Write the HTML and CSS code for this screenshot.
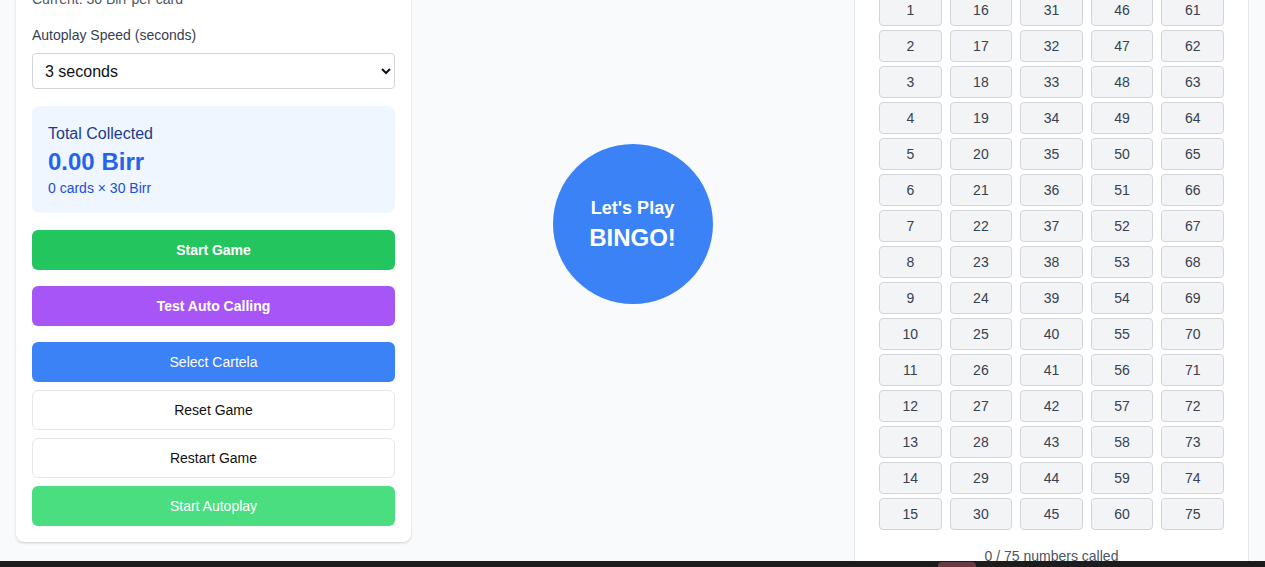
FILE: index.html
```html
<!DOCTYPE html>
<html lang="en">
<head>
<meta charset="utf-8">
<title>Bingo</title>
<link rel="stylesheet" href="styles.css">
</head>
<body>
<main class="layout">
  <section class="card controls">
    <h2 class="card-title">Game Settings</h2>
    <label class="field-label">Price per Card (Birr)</label>
    <input class="field-input" type="number" value="30">
    <p class="hint">Current: 30 Birr per card</p>

    <label class="field-label speed-label" for="speed">Autoplay Speed (seconds)</label>
    <select id="speed" class="field-select">
      <option>3 seconds</option>
    </select>

    <div class="total">
      <div class="total-label">Total Collected</div>
      <div class="total-amount">0.00 Birr</div>
      <div class="total-detail">0 cards × 30 Birr</div>
    </div>

    <div class="actions">
      <button class="btn btn-green bold">Start Game</button>
      <button class="btn btn-purple bold">Test Auto Calling</button>
      <div class="actions-tight">
        <button class="btn btn-blue">Select Cartela</button>
        <button class="btn btn-outline">Reset Game</button>
        <button class="btn btn-outline">Restart Game</button>
        <button class="btn btn-lightgreen">Start Autoplay</button>
      </div>
    </div>
  </section>

  <section class="stage">
    <div class="ball">
      <span class="ball-top">Let's Play</span>
      <span class="ball-main">BINGO!</span>
    </div>
  </section>

  <section class="card board">
    <h2 class="card-title board-title">Called Numbers</h2>
    <div class="letters">
      <span>B</span><span>I</span><span>N</span><span>G</span><span>O</span>
    </div>
    <div class="grid" id="grid"></div>
    <p class="called">0 / 75 numbers called</p>
  </section>
</main>
<div class="taskbar"><span class="task-item"></span></div>
<script src="app.js"></script>
</body>
</html>
```

FILE: app.js
```js
const grid = document.getElementById('grid');
for (let r = 1; r <= 15; r++) {
  for (let c = 0; c < 5; c++) {
    const d = document.createElement('div');
    d.className = 'cell';
    d.textContent = r + c * 15;
    grid.appendChild(d);
  }
}
```

FILE: styles.css
```css
* { box-sizing: border-box; }
html, body { margin: 0; padding: 0; }
body {
  background: #f9fafb;
  font-family: "Liberation Sans", Arial, sans-serif;
  color: #111827;
  overflow: hidden;
}
.layout {
  display: grid;
  grid-template-columns: repeat(3, 1fr);
  gap: 24px;
  padding: 16px;
  margin-top: -155px;
}
.card {
  background: #fff;
  border-radius: 8px;
  box-shadow: 0 1px 3px rgba(0,0,0,0.12), 0 1px 2px rgba(0,0,0,0.06);
}
.controls {
  padding: 16px;
  align-self: start;
  display: flex;
  flex-direction: column;
}
.card-title {
  margin: 0 0 16px;
  font-size: 20px;
  line-height: 28px;
  font-weight: 700;
}
.field-label {
  display: block;
  font-size: 14px;
  line-height: 20px;
  color: #374151;
  margin-bottom: 8px;
}
.field-input {
  height: 36px;
  border: 1px solid #d1d5db;
  border-radius: 4px;
  padding: 0 12px;
  font: 16px "Liberation Sans", Arial, sans-serif;
  margin-bottom: 4px;
}
.hint {
  margin: 0 0 16px;
  font-size: 14px;
  line-height: 20px;
  color: #4b5563;
}
.field-select {
  height: 36px;
  border: 1px solid #d1d5db;
  border-radius: 4px;
  padding: 0 8px;
  font: 16px "Liberation Sans", Arial, sans-serif;
  color: #111;
  background: #fff;
  margin-bottom: 17px;
}
.total {
  background: #eff6ff;
  border-radius: 8px;
  padding: 17px 16px 16px;
  height: 107px;
  margin-bottom: 17px;
}
.total-label {
  font-size: 16px;
  line-height: 22px;
  color: #1e3a8a;
}
.total-amount {
  font-size: 24px;
  line-height: 34px;
  font-weight: 700;
  color: #2563eb;
}
.total-detail {
  font-size: 14px;
  line-height: 18px;
  color: #1d4ed8;
}
.actions {
  display: flex;
  flex-direction: column;
  gap: 16px;
}
.actions-tight {
  display: flex;
  flex-direction: column;
  gap: 8px;
}
.btn {
  height: 40px;
  width: 100%;
  border-radius: 6px;
  border: 1px solid transparent;
  font: 14px "Liberation Sans", Arial, sans-serif;
  color: #fff;
  cursor: pointer;
}
.bold { font-weight: 700; }
.btn-green { background: #22c55e; }
.btn-purple { background: #a855f7; }
.btn-blue { background: #3b82f6; }
.btn-lightgreen { background: #4ade80; }
.btn-outline {
  background: #fff;
  border-color: #e5e7eb;
  color: #111;
}
.stage {
  display: flex;
  align-items: center;
  justify-content: center;
}
.ball {
  width: 160px;
  height: 160px;
  border-radius: 50%;
  background: #3b82f6;
  color: #fff;
  display: flex;
  flex-direction: column;
  align-items: center;
  justify-content: center;
  font-weight: 700;
}
.ball-top { font-size: 18px; line-height: 28px; }
.ball-main { font-size: 24px; line-height: 32px; }
.board {
  padding: 24px 24px 20px;
  border-radius: 0;
  border: 1px solid #e5e7eb;
  box-shadow: none;
}
.board-title { text-align: center; }
.letters {
  display: grid;
  grid-template-columns: repeat(5, 1fr);
  gap: 8px;
  height: 40px;
  margin-bottom: 24px;
}
.letters span {
  display: flex;
  align-items: center;
  justify-content: center;
  background: #2563eb;
  color: #fff;
  font-weight: 700;
  font-size: 20px;
  border-radius: 4px;
}
.grid {
  display: grid;
  grid-template-columns: repeat(5, 1fr);
  column-gap: 8px;
  row-gap: 4px;
}
.cell {
  height: 32px;
  display: flex;
  align-items: center;
  justify-content: center;
  background: #f3f4f6;
  border: 1px solid #d1d5db;
  border-radius: 4px;
  font-size: 14px;
  color: #374151;
}
.called {
  margin: 16px 0 0;
  text-align: center;
  font-size: 14px;
  line-height: 20px;
  color: #4b5563;
}
.taskbar {
  position: fixed;
  left: 0;
  right: 0;
  bottom: 0;
  height: 6px;
  background: #1c1c1c;
}
.task-item {
  position: absolute;
  left: 938px;
  top: 1px;
  width: 38px;
  height: 8px;
  border-radius: 4px 4px 0 0;
  background: #6b3a40;
}
```
